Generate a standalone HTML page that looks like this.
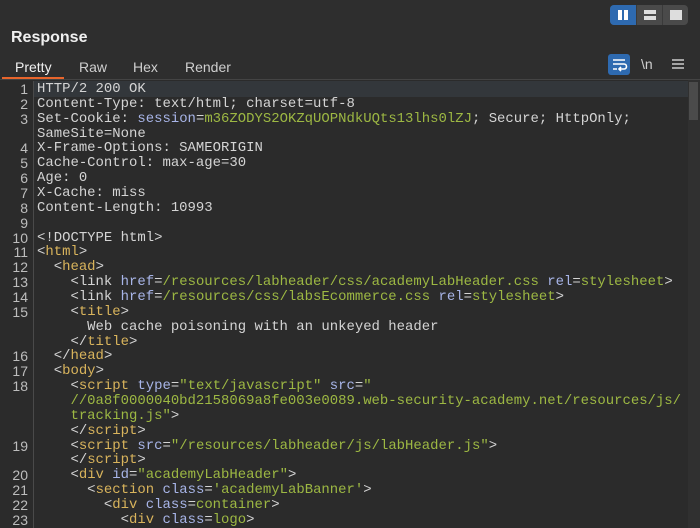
<!DOCTYPE html>
<html><head><style>
body{margin:0;width:700px;height:528px;background:#2b2b2b;overflow:hidden;font-family:"Liberation Sans",sans-serif;position:relative}
.top{position:absolute;left:0;top:0;width:700px;height:80px;background:#2e2e2e}
.toggle{position:absolute;left:610px;top:5px;width:78px;height:20px;background:#4a4a4a;border-radius:4px;overflow:hidden}
.toggle div{position:absolute;top:0;height:20px;width:26px}
h1{position:absolute;left:11px;top:29px;margin:0;font-size:16px;font-weight:bold;color:#f0f0f0}
.tab{position:absolute;top:59px;font-size:14px;color:#cfcfcf}
.ul{position:absolute;left:2px;top:77px;width:62px;height:2px;background:#e8652c}
.sep{position:absolute;left:0;top:79px;width:700px;height:1px;background:#444}
.hl{position:absolute;left:34px;top:81px;width:654px;height:16px;background:#33373b}
.gut{position:absolute;left:0;top:81px;width:33px;height:447px;border-right:1px solid #4a4a4a}
pre{margin:0;position:absolute;top:82px;font-family:"Liberation Mono",monospace;font-size:13.95px;line-height:14.86px;color:#d4d4d4}
.n{left:0;width:28px;text-align:right;color:#bdbdbd;font-family:"Liberation Sans",sans-serif;font-size:14px}
.c{left:37px}
.t{color:#d9b45c}.a{color:#a8b5e8}.v{color:#9db843}
.sb{position:absolute;left:688px;top:80px;width:12px;height:448px;background:#303030}
.th{position:absolute;left:689px;top:82px;width:9px;height:38px;background:#4b4b4b}
</style></head><body>
<div class="top"></div>
<div class="toggle"><div style="left:0;background:#2e6ab0"><svg width="26" height="20"><rect x="8" y="5" width="4" height="10" fill="#fff"/><rect x="14" y="5" width="4" height="10" fill="#fff"/></svg></div><div style="left:26px;border-left:1px solid #3a3a3a"><svg width="26" height="20"><rect x="7" y="5" width="12" height="4" fill="#ddd"/><rect x="7" y="11" width="12" height="4" fill="#ddd"/></svg></div><div style="left:52px;border-left:1px solid #3a3a3a"><svg width="26" height="20"><rect x="7" y="5" width="12" height="10" fill="#ddd"/></svg></div></div>
<h1>Response</h1>
<div class="tab" style="left:15px;color:#f0f0f0">Pretty</div>
<div class="tab" style="left:79px">Raw</div>
<div class="tab" style="left:133px">Hex</div>
<div class="tab" style="left:185px">Render</div>
<div class="ul"></div>
<svg style="position:absolute;left:608px;top:54px" width="22" height="21"><rect width="22" height="21" rx="3" fill="#2e6ab0"/><path d="M5 6h12M5 10h11a2.5 2.5 0 0 1 0 5h-4M13 13l-2 2 2 2M5 15h4" stroke="#fff" stroke-width="1.6" fill="none"/></svg>
<div style="position:absolute;left:641px;top:56px;color:#d0d0d0;font-size:14px">\n</div>
<svg style="position:absolute;left:671px;top:57px" width="14" height="14"><path d="M1 3h12M1 7h12M1 11h12" stroke="#ccc" stroke-width="1.6"/></svg>
<div class="sep"></div>
<div class="hl"></div>
<div class="gut"></div>
<pre class="n">1
2
3

4
5
6
7
8
9
10
11
12
13
14
15


16
17
18



19

20
21
22
23</pre>
<pre class="c">HTTP/2 200 OK
Content-Type: text/html; charset=utf-8
Set-Cookie: <span class="a">session</span>=<span class="v">m36ZODYS2OKZqUOPNdkUQts13lhs0lZJ</span>; Secure; HttpOnly;
SameSite=None
X-Frame-Options: SAMEORIGIN
Cache-Control: max-age=30
Age: 0
X-Cache: miss
Content-Length: 10993

&lt;!DOCTYPE html&gt;
&lt;<span class="t">html</span>&gt;
  &lt;<span class="t">head</span>&gt;
    &lt;link <span class="a">href</span>=<span class="v">/resources/labheader/css/academyLabHeader.css</span> <span class="a">rel</span>=<span class="v">stylesheet</span>&gt;
    &lt;link <span class="a">href</span>=<span class="v">/resources/css/labsEcommerce.css</span> <span class="a">rel</span>=<span class="v">stylesheet</span>&gt;
    &lt;<span class="t">title</span>&gt;
      Web cache poisoning with an unkeyed header
    &lt;/<span class="t">title</span>&gt;
  &lt;/<span class="t">head</span>&gt;
  &lt;<span class="t">body</span>&gt;
    &lt;<span class="t">script</span> <span class="a">type</span>=<span class="v">"text/javascript"</span> <span class="a">src</span>=<span class="v">"
    //0a8f0000040bd2158069a8fe003e0089.web-security-academy.net/resources/js/
    tracking.js"</span>&gt;
    &lt;/<span class="t">script</span>&gt;
    &lt;<span class="t">script</span> <span class="a">src</span>=<span class="v">"/resources/labheader/js/labHeader.js"</span>&gt;
    &lt;/<span class="t">script</span>&gt;
    &lt;<span class="t">div</span> <span class="a">id</span>=<span class="v">"academyLabHeader"</span>&gt;
      &lt;<span class="t">section</span> <span class="a">class</span>=<span class="v">'academyLabBanner'</span>&gt;
        &lt;<span class="t">div</span> <span class="a">class</span>=<span class="v">container</span>&gt;
          &lt;<span class="t">div</span> <span class="a">class</span>=<span class="v">logo</span>&gt;</pre>
<div class="sb"></div><div class="th"></div>
</body></html>
